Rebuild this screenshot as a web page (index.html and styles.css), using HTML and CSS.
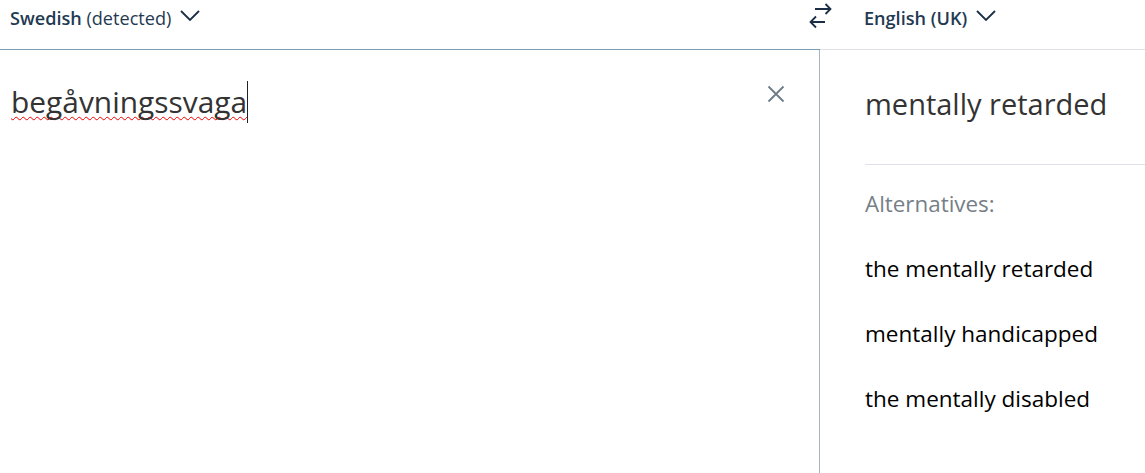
FILE: index.html
```html
<!DOCTYPE html>
<html lang="en">
<head>
    <meta charset="UTF-8">
    <meta name="viewport" content="width=device-width, initial-scale=1.0">
    <title>Translator</title>
    <link rel="stylesheet" href="styles.css">
</head>
<body>
    <header class="lang-bar">
        <div class="lang-source">
            <button class="lang-btn" type="button">
                <span><strong>Swedish</strong> (detected)</span>
                <svg class="chevron" width="20" height="11" viewBox="0 0 20 11"><path d="M1 1 L10 10 L19 1"/></svg>
            </button>
        </div>
        <button class="swap-btn" type="button" aria-label="Swap">
            <svg width="24" height="26" viewBox="0 0 24 26"><path d="M7 6 H22.500 M17.500 1 L22.500 6 L17.500 11 M3 19 H17 M8 13.500 L2.500 19 L8 24.500"/></svg>
        </button>
        <div class="lang-target">
            <button class="lang-btn lang-btn-target" type="button">
                <span>English (UK)</span>
                <svg class="chevron" width="20" height="11" viewBox="0 0 20 11"><path d="M1 1 L10 10 L19 1"/></svg>
            </button>
        </div>
    </header>
    <main class="panels">
        <section class="source-panel">
            <div class="source-text"><span class="misspelt">begåvningssvaga</span><span class="caret"></span></div>
            <button class="clear-btn" type="button" aria-label="Clear">
                <svg width="18" height="18" viewBox="0 0 18 18"><path d="M1.500 1.500 L16.500 16.500 M16.500 1.500 L1.500 16.500"/></svg>
            </button>
        </section>
        <section class="target-panel">
            <div class="result">mentally retarded</div>
            <div class="alternatives">
                <div class="alt-label">Alternatives:</div>
                <ul class="alt-list">
                    <li>the mentally retarded</li>
                    <li>mentally handicapped</li>
                    <li>the mentally disabled</li>
                </ul>
            </div>
        </section>
    </main>
</body>
</html>
```

FILE: styles.css
```css
body {
  font-family: "Open Sans", "Noto Sans", sans-serif;
  margin: 0;
  padding: 0;
  background-color: #fff;
  color: #333;
  overflow: hidden;
}
button {
  font-family: inherit;
  background: none;
  border: none;
  padding: 0;
  cursor: pointer;
}

/* Language bar */
.lang-bar {
  display: flex;
  align-items: flex-start;
  height: 50px;
  box-sizing: border-box;
}
.lang-source {
  width: 820px;
  height: 50px;
  box-sizing: border-box;
  padding-left: 10px;
  border-bottom: 1px solid #7a9cb0;
  flex-shrink: 0;
}
.lang-target {
  flex: 1;
  height: 50px;
  box-sizing: border-box;
  padding-left: 44px;
  border-bottom: 1px solid #dfe3e8;
}
.lang-btn {
  display: flex;
  align-items: center;
  gap: 9px;
  height: 36px;
  font-size: 18.100px;
  color: #1f3a52;
  white-space: nowrap;
}
.lang-btn strong {
  font-weight: 600;
}
.lang-btn-target {
  font-weight: 600;
}
.chevron {
  margin-top: -6px;
}
.chevron path {
  fill: none;
  stroke: #1a2f45;
  stroke-width: 1.800;
}
.swap-btn {
  position: absolute;
  left: 808px;
  top: 3px;
  width: 24px;
  height: 26px;
}
.swap-btn path {
  fill: none;
  stroke: #1a2f45;
  stroke-width: 1.800;
}

/* Panels */
.panels {
  display: flex;
  height: 423px;
}
.source-panel {
  position: relative;
  width: 820px;
  box-sizing: border-box;
  border-right: 1px solid #a9b4bc;
  padding: 30px 0 0 11px;
  flex-shrink: 0;
}
.source-text {
  display: flex;
  align-items: center;
  font-size: 29.900px;
  line-height: 44px;
  color: #333;
}
.misspelt {
  text-decoration: underline wavy #f00000 1px;
  text-underline-offset: 3px;
  text-decoration-skip-ink: none;
}
.caret {
  display: inline-block;
  width: 1px;
  height: 42px;
  background-color: #222;
}
.clear-btn {
  position: absolute;
  left: 767px;
  top: 35px;
  width: 18px;
  height: 18px;
}
.clear-btn path {
  fill: none;
  stroke: #6f7b85;
  stroke-width: 1.800;
}
.target-panel {
  flex: 1;
  padding: 32px 0 0 45px;
}
.result {
  font-size: 29px;
  line-height: 44px;
  color: #333;
  white-space: nowrap;
  padding-bottom: 38px;
  border-bottom: 1px solid #dfe3e8;
}
.alt-label {
  font-size: 22.400px;
  line-height: 30px;
  color: #767f88;
  margin-top: 24px;
}
.alt-list {
  list-style: none;
  margin: 0;
  padding: 0;
}
.alt-list li {
  font-size: 22.500px;
  line-height: 30px;
  color: #000;
  margin-top: 35px;
  white-space: nowrap;
}
```
